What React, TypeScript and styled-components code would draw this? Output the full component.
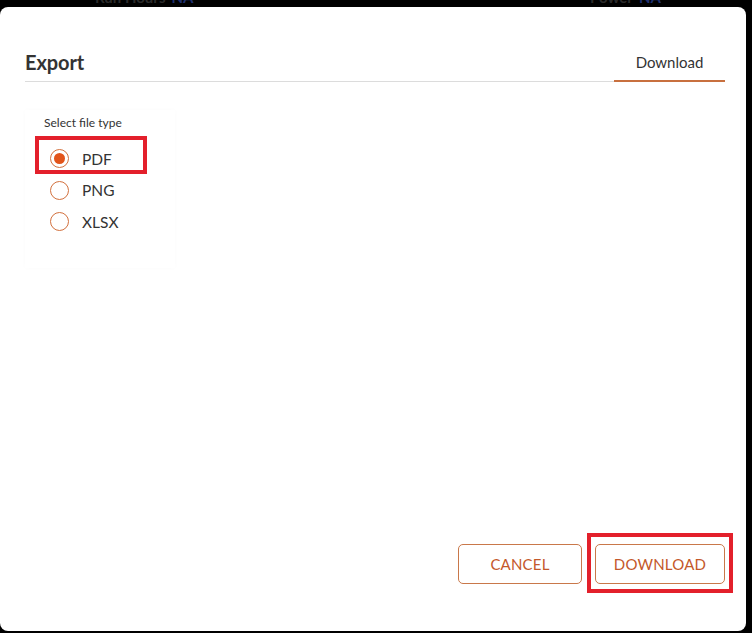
import React, { useState } from "react";
import styled, { createGlobalStyle } from "styled-components";

const GlobalStyle = createGlobalStyle`
  html, body {
    margin: 0;
    padding: 0;
    background: #000;
    font-family: Lato, "Open Sans", "Liberation Sans", sans-serif;
  }
  * { box-sizing: border-box; }
`;

const Screen = styled.div`
  width: 752px;
  height: 633px;
  background: #000;
  overflow: hidden;
  display: flex;
  flex-direction: column;
`;

const BackStrip = styled.div`
  height: 7px;
  overflow: hidden;
  display: flex;
  padding-left: 95px;
  flex-shrink: 0;
`;

const BackItem = styled.div<{ $width: number }>`
  width: ${(p) => p.$width}px;
  margin-top: -12px;
  font-size: 15px;
  font-weight: 700;
  color: #2a2a2a;
  white-space: nowrap;
  span { color: #1e2f6e; margin-left: 6px; }
`;

const Modal = styled.div`
  width: 746px;
  height: 624px;
  background: #fff;
  border-radius: 8px;
  padding: 38px 21px 47px 25px;
  display: flex;
  flex-direction: column;
`;

const Header = styled.div`
  display: flex;
  align-items: stretch;
  justify-content: space-between;
  border-bottom: 1px solid #dcdcdc;
  height: 37px;
`;

const Title = styled.h2`
  margin: 0;
  padding-bottom: 3px;
  font-size: 20px;
  font-weight: 700;
  color: #333;
  display: flex;
  align-items: center;
  letter-spacing: -0.1px;
`;

const Tab = styled.div`
  width: 111px;
  display: flex;
  align-items: center;
  justify-content: center;
  padding-bottom: 2px;
  font-size: 15px;
  color: #333;
  border-bottom: 2px solid #c8703f;
  margin-bottom: -1px;
`;

const Body = styled.div`
  flex: 1;
  padding-top: 28px;
`;

const Card = styled.div`
  width: 150px;
  height: 158px;
  padding: 4px 0 0 19px;
  box-shadow: 0 0 5px rgba(0, 0, 0, 0.02);
  display: flex;
  flex-direction: column;
`;

const CardLabel = styled.div`
  font-size: 12px;
  color: #333;
  height: 18px;
  line-height: 18px;
  margin-bottom: 11px;
`;

const Option = styled.label`
  position: relative;
  display: flex;
  align-items: center;
  gap: 13px;
  height: 31.5px;
  padding-left: 6px;
  font-size: 15.5px;
  color: #333;
  cursor: pointer;
`;

const Radio = styled.span<{ $checked: boolean }>`
  width: 19px;
  height: 19px;
  border-radius: 50%;
  border: 1.5px solid #d2703d;
  display: flex;
  align-items: center;
  justify-content: center;
  flex-shrink: 0;
  &::after {
    content: "";
    width: 11px;
    height: 11px;
    border-radius: 50%;
    background: #e2541a;
    display: ${(p) => (p.$checked ? "block" : "none")};
  }
`;

const Highlight = styled.span<{ $left: number; $top: number; $w: number; $h: number }>`
  position: absolute;
  left: ${(p) => p.$left}px;
  top: ${(p) => p.$top}px;
  width: ${(p) => p.$w}px;
  height: ${(p) => p.$h}px;
  border: 4px solid #e3202b;
  pointer-events: none;
`;

const Footer = styled.div`
  display: flex;
  justify-content: flex-end;
  gap: 13px;
`;

const ButtonWrap = styled.div`
  position: relative;
`;

const Button = styled.button<{ $w: number }>`
  width: ${(p) => p.$w}px;
  height: 40px;
  background: #fff;
  border: 1px solid #c9784a;
  border-radius: 5px;
  color: #c4582a;
  font-family: Lato, "Open Sans", "Liberation Sans", sans-serif;
  font-size: 15px;
  letter-spacing: 0.2px;
  text-transform: uppercase;
  cursor: pointer;
`;

const types = ["PDF", "PNG", "XLSX"];

export default function App() {
  const [sel, setSel] = useState("PDF");
  return (
    <>
      <GlobalStyle />
      <Screen>
        <BackStrip>
          <BackItem $width={495}>
            Run Hours<span>NA</span>
          </BackItem>
          <BackItem $width={120}>
            Power<span>NA</span>
          </BackItem>
        </BackStrip>
        <Modal>
          <Header>
            <Title>Export</Title>
            <Tab>Download</Tab>
          </Header>
          <Body>
            <Card>
              <CardLabel>Select file type</CardLabel>
              {types.map((t) => (
                <Option key={t} onClick={() => setSel(t)}>
                  <Radio $checked={sel === t} />
                  {t}
                  {t === "PDF" && <Highlight $left={-9} $top={-7} $w={112} $h={38} />}
                </Option>
              ))}
            </Card>
          </Body>
          <Footer>
            <ButtonWrap>
              <Button $w={124}>Cancel</Button>
            </ButtonWrap>
            <ButtonWrap>
              <Button $w={130}>Download</Button>
              <Highlight $left={-8} $top={-11} $w={146} $h={60} />
            </ButtonWrap>
          </Footer>
        </Modal>
      </Screen>
    </>
  );
}
